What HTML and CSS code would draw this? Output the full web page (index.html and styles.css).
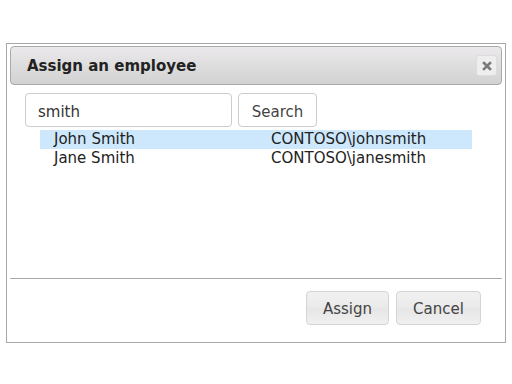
FILE: index.html
```html
<!DOCTYPE html>
<html>
<head>
<meta charset="utf-8">
<link rel="stylesheet" href="styles.css">
</head>
<body>
<div class="dialog">
  <div class="header">
    <span class="title">Assign an employee</span>
    <button class="close" aria-label="close">
      <svg width="10" height="10" viewBox="0 0 10 10"><path d="M2 2 L8 8 M8 2 L2 8" stroke="#7a7a7a" stroke-width="2.6" stroke-linecap="square"/></svg>
    </button>
  </div>
  <div class="content">
    <div class="search">
      <div class="input">smith</div>
      <div class="btn search-btn">Search</div>
    </div>
    <div class="results">
      <div class="row selected"><span class="name">John Smith</span><span class="login">CONTOSO\johnsmith</span></div>
      <div class="row"><span class="name">Jane Smith</span><span class="login">CONTOSO\janesmith</span></div>
    </div>
  </div>
  <div class="footer">
    <div class="btn action">Assign</div>
    <div class="btn action">Cancel</div>
  </div>
</div>
</body>
</html>
```
FILE: styles.css
```css
html, body { margin: 0; padding: 0; background: #fff; }
body { font-family: "DejaVu Sans", Verdana, sans-serif; }
.dialog {
  margin: 43px 0 0 6px;
  width: 492px;
  height: 296px;
  border: 1px solid #a8a8a8;
  padding: 2px 3px 0 3px;
  display: flex;
  flex-direction: column;
}
.header {
  height: 37px;
  border: 1px solid #aaa;
  border-radius: 4px;
  background: linear-gradient(#ebe9eb, #d2d2d2);
  display: flex;
  align-items: center;
  justify-content: space-between;
  padding: 0 4px 0 16px;
}
.title { font-weight: bold; font-size: 15px; color: #222; padding-top: 1px; }
.close {
  width: 21px; height: 21px;
  border: 1px solid #ddd;
  border-radius: 3px;
  background: #eeeeee;
  padding: 0;
  display: flex; align-items: center; justify-content: center;
}
.content { flex: 1; padding: 8px 0 0 15px; border-bottom: 1px solid #a8a8a8; }
.search { display: flex; gap: 6px; }
.input {
  width: 193px; height: 32px;
  border: 1px solid #ccc; border-radius: 4px;
  font-size: 15px; color: #333;
  padding-left: 12px;
  line-height: 36px;
}
.btn {
  border: 1px solid #ccc; border-radius: 4px;
  font-size: 15px; color: #444;
  display: flex; align-items: center; justify-content: center;
  box-sizing: border-box;
}
.search-btn { width: 79px; height: 34px; background: #fff; padding-top: 3px; }
.results { margin: 3px 0 0 15px; width: 432px; font-size: 15px; color: #222; }
.row { height: 18px; line-height: 18px; display: flex; padding-left: 14px; }
.row.selected { background: #cde8fc; height: 19px; line-height: 19px; }
.name { width: 217px; }
.footer {
  height: 63px;
  display: flex; justify-content: flex-end; align-items: flex-start;
  gap: 7px;
  padding: 12px 21px 0 0;
  box-sizing: border-box;
}
.action {
  width: 83px; height: 34px;
  background: linear-gradient(#f1f1f1, #eaeaea 50%, #e6e6e6 51%, #f0f0f0);
  border-color: #d4d4d4;
  padding-top: 2px;
}
.action:last-child { width: 85px; }
```
